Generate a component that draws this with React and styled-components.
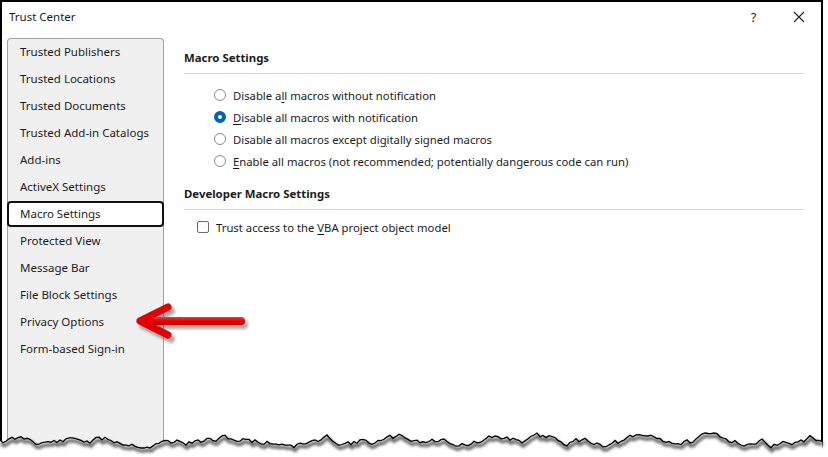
import React from "react";
import styled, { createGlobalStyle } from "styled-components";

const Global = createGlobalStyle`
html, body { margin: 0; padding: 0; background: #fff; }
body { font-family: "Noto Sans", "Liberation Sans", sans-serif; color: #1b1b1b; }
`;

const sideItems = [
  "Trusted Publishers",
  "Trusted Locations",
  "Trusted Documents",
  "Trusted Add-in Catalogs",
  "Add-ins",
  "ActiveX Settings",
  "Macro Settings",
  "Protected View",
  "Message Bar",
  "File Block Settings",
  "Privacy Options",
  "Form-based Sign-in",
];

const macroOptions = [
  { pre: "Disable a", key: "l", post: "l macros without notification" },
  { pre: "", key: "D", post: "isable all macros with notification", checked: true },
  { pre: "Disable all macros except di", key: "g", post: "itally signed macros" },
  { pre: "", key: "E", post: "nable all macros (not recommended; potentially dangerous code can run)" },
];

// torn paper edge, fixed seed so it draws the same each time
const makeTear = () => {
  let seed = 11;
  const rand = () => {
    seed = (seed * 9301 + 49297) % 233280;
    return seed / 233280;
  };
  let y = 439;
  const pts = [];
  for (let x = 0; x <= 824; x += 3) {
    y += (rand() - 0.5) * 7;
    y += (441 - y) * 0.1;
    if (y < 433) y = 433;
    if (y > 448) y = 448;
    pts.push([x, Math.round(y * 10) / 10]);
  }
  return pts;
};
const tear = makeTear();
const tearLine = tear.map((p) => p.join(",")).join(" ");
const tearFill = `0,457 ${tearLine} 824,457 828,457`;

const Page = styled.div`
  position: relative;
  width: 828px;
  height: 457px;
  overflow: hidden;
`;

const Frame = styled.div`
  width: 819px;
  height: 455px;
  border: 2px solid #000;
  border-bottom: none;
  background: #fff;
  display: flex;
  flex-direction: column;
`;

const TitleBar = styled.div`
  height: 30px;
  display: flex;
  align-items: center;
  padding: 0 0 0 7px;
  font-size: 11.5px;
`;

const Title = styled.div`
  flex: 1;
  margin-top: -2px;
`;

const TitleButton = styled.div`
  width: 45px;
  height: 28px;
  display: flex;
  align-items: center;
  justify-content: center;
  font-size: 13px;
  color: #222;
  margin-left: ${(p) => p.$shift || "0px"};
`;

const Body = styled.div`
  flex: 1;
  display: flex;
  padding: 6px 0 0 5px;
  min-height: 0;
`;

const Sidebar = styled.div`
  width: 155px;
  border: 1px solid #a3a3a3;
  border-bottom: none;
  border-radius: 4px 4px 0 0;
  background: #f0f0f0;
  display: flex;
  flex-direction: column;
`;

const SideItem = styled.div`
  height: ${(p) => (p.$active ? "21px" : "25px")};
  display: flex;
  align-items: center;
  padding-left: ${(p) => (p.$active ? "11px" : "12px")};
  padding-bottom: 1px;
  font-size: 11.5px;
  margin: ${(p) => (p.$active ? "0 -1px 1px -1px" : "0 0 1px 0")};
  border: ${(p) => (p.$active ? "2px solid #111" : "none")};
  border-radius: 4px;
  background: ${(p) => (p.$active ? "#fff" : "transparent")};
`;

const Content = styled.div`
  flex: 1;
  padding: 12px 17px 0 20px;
`;

const SectionHead = styled.div`
  font-weight: 700;
  font-size: 11.4px;
  line-height: 16px;
  padding-bottom: 7px;
  border-bottom: 1px solid #d6d6d6;
  margin-top: ${(p) => p.$top || "0px"};
`;

const OptionList = styled.div`
  display: flex;
  flex-direction: column;
  padding: ${(p) => p.$pad};
`;

const OptionRow = styled.label`
  height: 22px;
  display: flex;
  align-items: center;
  gap: 7px;
  font-size: 11.3px;
`;

const Radio = styled.span`
  width: 12px;
  height: 12px;
  box-sizing: border-box;
  border-radius: 50%;
  border: ${(p) => (p.$on ? "4px solid #0063b8" : "1px solid #8a8a8a")};
  background: #fff;
`;

const Check = styled.span`
  width: 12px;
  height: 12px;
  box-sizing: border-box;
  border: 1px solid #6b6b6b;
  border-radius: 2px;
  background: #fff;
`;

const Key = styled.span`
  text-decoration: underline;
  text-underline-offset: 2px;
`;

const Overlay = styled.svg`
  position: absolute;
  left: 0;
  top: 0;
  pointer-events: none;
`;

const Opt = ({ o }) => (
  <span>
    {o.pre}
    <Key>{o.key}</Key>
    {o.post}
  </span>
);

export default function App() {
  return (
    <Page>
      <Global />
      <Frame>
        <TitleBar>
          <Title>Trust Center</Title>
          <TitleButton $shift="2px">?</TitleButton>
          <TitleButton>
            <svg width="12" height="12" viewBox="0 0 12 12">
              <path d="M1 1L11 11M11 1L1 11" stroke="#222" strokeWidth="1.1" />
            </svg>
          </TitleButton>
        </TitleBar>
        <Body>
          <Sidebar>
            {sideItems.map((s) => (
              <SideItem key={s} $active={s === "Macro Settings"}>
                {s}
              </SideItem>
            ))}
          </Sidebar>
          <Content>
            <SectionHead>Macro Settings</SectionHead>
            <OptionList $pad="10px 0 0 30px">
              {macroOptions.map((o, i) => (
                <OptionRow key={i}>
                  <Radio $on={o.checked} />
                  <Opt o={o} />
                </OptionRow>
              ))}
            </OptionList>
            <SectionHead $top="14px">Developer Macro Settings</SectionHead>
            <OptionList $pad="6px 0 0 13px">
              <OptionRow>
                <Check />
                <span>
                  Trust access to the <Key>V</Key>BA project object model
                </span>
              </OptionRow>
            </OptionList>
          </Content>
        </Body>
      </Frame>

      <Overlay width="828" height="457" viewBox="0 0 828 457">
        <defs>
          <filter id="soft" x="-10%" y="-50%" width="120%" height="200%">
            <feGaussianBlur stdDeviation="1.6" />
          </filter>
          <linearGradient id="red" gradientUnits="userSpaceOnUse" x1="0" y1="316" x2="0" y2="326">
            <stop offset="0" stopColor="#ff4040" />
            <stop offset="0.5" stopColor="#e50000" />
            <stop offset="1" stopColor="#b00000" />
          </linearGradient>
        </defs>
        <polygon points={tearFill} fill="#fff" />
        <polyline
          points={tearLine}
          fill="none"
          stroke="#555"
          strokeWidth="3"
          transform="translate(1,3)"
          filter="url(#soft)"
        />
        <polyline points={tearLine} fill="none" stroke="#000" strokeWidth="1.3" />

        <g transform="translate(3,4)" filter="url(#soft)" opacity="0.5">
          <path d="M140 321H241M140 321L168 307M140 321L168 335" stroke="#555" strokeWidth="8" strokeLinecap="round" fill="none" />
        </g>
        <path d="M140 321L168 307M140 321L168 335" stroke="#e20000" strokeWidth="7" strokeLinecap="round" fill="none" />
        <path d="M146 321H241" stroke="url(#red)" strokeWidth="8" strokeLinecap="round" fill="none" />
        <polygon points="137,321 154,312 154,330" fill="#e20000" />
      </Overlay>
    </Page>
  );
}
